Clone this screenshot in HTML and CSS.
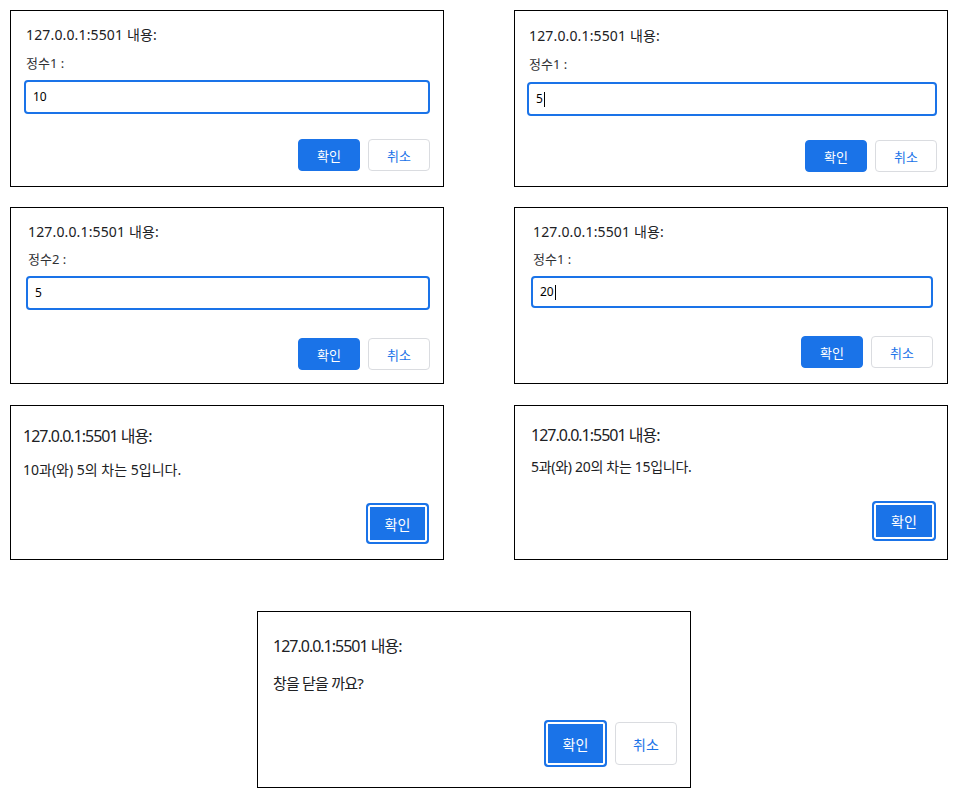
FILE: index.html
```html
<!DOCTYPE html>
<html lang="ko">
<head>
<meta charset="utf-8">
<title>Dialogs</title>
<link rel="stylesheet" href="styles.css">
</head>
<body>
<main class="board">
  <section class="dialog prompt d1">
    <div class="title">127.0.0.1:5501 내용:</div>
    <div class="label">정수1 :</div>
    <div class="field">10</div>
    <div class="actions">
      <button class="btn primary">확인</button>
      <button class="btn secondary">취소</button>
    </div>
  </section>
  <section class="dialog prompt d2">
    <div class="title">127.0.0.1:5501 내용:</div>
    <div class="label">정수1 :</div>
    <div class="field">5<span class="caret"></span></div>
    <div class="actions">
      <button class="btn primary">확인</button>
      <button class="btn secondary">취소</button>
    </div>
  </section>
  <section class="dialog prompt d3">
    <div class="title">127.0.0.1:5501 내용:</div>
    <div class="label">정수2 :</div>
    <div class="field">5</div>
    <div class="actions">
      <button class="btn primary">확인</button>
      <button class="btn secondary">취소</button>
    </div>
  </section>
  <section class="dialog prompt d4">
    <div class="title">127.0.0.1:5501 내용:</div>
    <div class="label">정수1 :</div>
    <div class="field">20<span class="caret"></span></div>
    <div class="actions">
      <button class="btn primary">확인</button>
      <button class="btn secondary">취소</button>
    </div>
  </section>
  <section class="dialog alert d5">
    <div class="title big">127.0.0.1:5501 내용:</div>
    <div class="message">10과(와) 5의 차는 5입니다.</div>
    <div class="actions">
      <button class="btn primary focused">확인</button>
    </div>
  </section>
  <section class="dialog alert d6">
    <div class="title big">127.0.0.1:5501 내용:</div>
    <div class="message">5과(와) 20의 차는 15입니다.</div>
    <div class="actions">
      <button class="btn primary focused">확인</button>
    </div>
  </section>
  <section class="dialog confirm d7">
    <div class="title big">127.0.0.1:5501 내용:</div>
    <div class="message">창을 닫을 까요?</div>
    <div class="actions">
      <button class="btn primary focused">확인</button>
      <button class="btn secondary">취소</button>
    </div>
  </section>
</main>
</body>
</html>
```
FILE: styles.css
```css
* { box-sizing: border-box; }
html, body { margin: 0; background: #fff; }
body {
  font-family: "Noto Sans", "Noto Sans CJK KR", sans-serif;
  color: #202124;
}
.board {
  display: grid;
  grid-template-columns: 434px 434px;
  column-gap: 70px;
  row-gap: 20px;
  padding: 10px;
  align-items: start;
}
.dialog {
  border: 1px solid #000;
  background: #fff;
  display: flex;
  flex-direction: column;
  height: 177px;
  padding: 14px 13px 15px 13px;
}
.title {
  font-size: 14px;
  line-height: 20px;
  margin-left: 2px;
  letter-spacing: 0.15px;
  white-space: nowrap;
}
.label {
  font-size: 13px;
  line-height: 18px;
  margin: 9px 0 8px 2px;
  color: #303134;
}
.field {
  height: 34px;
  border: 2px solid #1a73e8;
  border-radius: 4px;
  padding: 0 7px;
  font-size: 12px;
  line-height: 30px;
  color: #000;
  display: flex;
  align-items: center;
}
.caret {
  display: inline-block;
  width: 1px;
  height: 15px;
  background: #000;
  margin-left: 1px;
}
.actions {
  margin-top: auto;
  display: flex;
  justify-content: flex-end;
  align-items: center;
  gap: 8px;
}
.btn {
  width: 62px;
  height: 32px;
  border-radius: 4px;
  font-family: "Noto Sans CJK KR", sans-serif;
  font-size: 13px;
  padding: 0;
  cursor: pointer;
}
.primary {
  background: #1a73e8;
  border: 1px solid #1a73e8;
  color: #fff;
}
.secondary {
  background: #fff;
  border: 1px solid #dadce0;
  color: #1a73e8;
}
.focused {
  border: 2px solid #1a73e8;
  box-shadow: inset 0 0 0 2px #fff;
}

/* individual dialogs */
.d2 { padding: 15px 10px 14px 12px; }
.d2 .label { margin-top: 9px; margin-bottom: 9px; }
.d3 { padding: 14px 13px 13px 15px; }
.d3 .label { margin-top: 8px; }
.d4 { padding: 14px 14px 15px 16px; }
.d4 .label { margin-top: 8px; }
.d4 .field { height: 32px; }

.big {
  font-size: 16px;
  line-height: 24px;
  letter-spacing: -1px;
  margin-left: 0;
}
.message {
  font-size: 14px;
  line-height: 20px;
  margin-top: 12px;
  letter-spacing: 0;
}
.alert {
  height: 155px;
  margin-top: 1px;
  padding: 18px 14px 15px 12px;
}
.alert .btn { width: 63px; height: 41px; font-size: 14px; }
.d6 { padding: 17px 11px 18px 16px; }
.d6 .message { margin-top: 10px; letter-spacing: -0.3px; }
.d6 .btn { width: 64px; height: 40px; }

.confirm {
  grid-column: 1 / span 2;
  justify-self: start;
  width: 434px;
  margin-top: 31px;
  margin-left: 247px;
  padding: 22px 13px 20px 15px;
}
.confirm .message { font-size: 15px; margin-top: 15px; letter-spacing: -0.8px; }
.confirm .btn { width: 62px; height: 43px; font-size: 14px; }
.confirm .btn.focused { width: 63px; height: 47px; }
```
